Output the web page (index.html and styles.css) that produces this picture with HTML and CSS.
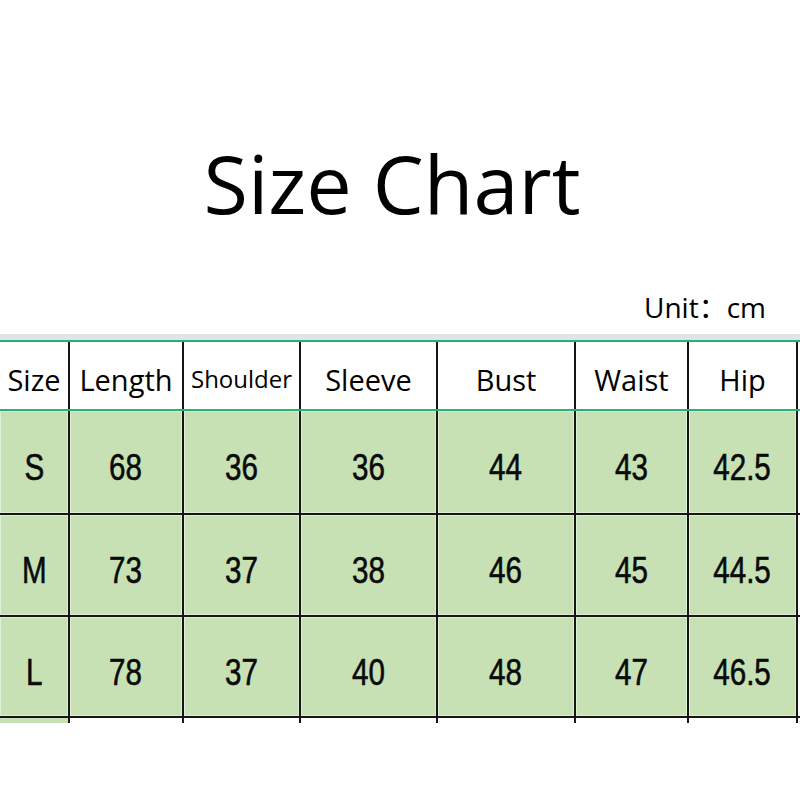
FILE: index.html
```html
<!DOCTYPE html>
<html>
<head>
<meta charset="utf-8">
<link rel="stylesheet" href="styles.css">
</head>
<body>
<div class="page">
  <h1 class="title">Size Chart</h1>
  <div class="unit">Unit：cm</div>
  <div class="strip"></div>
  <div class="table">
    <div class="row head">
      <div class="cell">Size</div>
      <div class="cell">Length</div>
      <div class="cell small">Shoulder</div>
      <div class="cell">Sleeve</div>
      <div class="cell">Bust</div>
      <div class="cell">Waist</div>
      <div class="cell">Hip</div>
    </div>
    <div class="row data">
      <div class="cell"><span class="num">S</span></div>
      <div class="cell"><span class="num">68</span></div>
      <div class="cell"><span class="num">36</span></div>
      <div class="cell"><span class="num">36</span></div>
      <div class="cell"><span class="num">44</span></div>
      <div class="cell"><span class="num">43</span></div>
      <div class="cell"><span class="num">42.5</span></div>
    </div>
    <div class="row data">
      <div class="cell"><span class="num">M</span></div>
      <div class="cell"><span class="num">73</span></div>
      <div class="cell"><span class="num">37</span></div>
      <div class="cell"><span class="num">38</span></div>
      <div class="cell"><span class="num">46</span></div>
      <div class="cell"><span class="num">45</span></div>
      <div class="cell"><span class="num">44.5</span></div>
    </div>
    <div class="row data">
      <div class="cell"><span class="num">L</span></div>
      <div class="cell"><span class="num">78</span></div>
      <div class="cell"><span class="num">37</span></div>
      <div class="cell"><span class="num">40</span></div>
      <div class="cell"><span class="num">48</span></div>
      <div class="cell"><span class="num">47</span></div>
      <div class="cell"><span class="num">46.5</span></div>
    </div>
    <div class="row tail">
      <div class="cell green"></div>
      <div class="cell"></div>
      <div class="cell"></div>
      <div class="cell"></div>
      <div class="cell"></div>
      <div class="cell"></div>
      <div class="cell"></div>
    </div>
  </div>
</div>
</body>
</html>
```
FILE: styles.css
```css
html, body {
  margin: 0;
  padding: 0;
  background: #ffffff;
}
.page {
  width: 800px;
  height: 800px;
  overflow: hidden;
  font-family: "Open Sans", "Noto Sans", "Noto Sans CJK SC", sans-serif;
  color: #000;
}
.title {
  margin: 0;
  padding-top: 128px;
  height: 120px;
  line-height: 110px;
  font-size: 81px;
  font-weight: 400;
  text-align: center;
  padding-right: 16px;
}
.unit {
  margin-top: 42px;
  height: 44px;
  line-height: 34px;
  font-size: 28px;
  text-align: right;
  padding-right: 34px;
}
.strip {
  height: 6px;
  background: #e2e3e8;
}
.table {
  width: 800px;
}
.row {
  display: grid;
  grid-template-columns: 70px 114px 117px 137px 138px 113px 109px 2px;
}
.cell {
  box-sizing: border-box;
  border-right: 2px solid #161616;
  display: flex;
  align-items: center;
  justify-content: center;
}
.head {
  border-top: 2px solid #1fb574;
  border-bottom: 2px solid #1fb574;
  height: 71px;
  box-sizing: border-box;
}
.head .cell {
  font-size: 29px;
  padding-top: 8px;
  background: #fff;
}
.head .cell.small {
  font-size: 24px;
  padding-top: 6px;
}
.data {
  height: 104px;
  box-sizing: border-box;
  border-bottom: 2px solid #161616;
}
.data:nth-child(3) {
  height: 102px;
}
.data:nth-child(4) {
  height: 101px;
}
.data .cell {
  background: #c7e1b5;
  box-shadow: inset 0 0 0 1px #e0efd4;
  font-family: "Liberation Sans", "Arial", sans-serif;
  font-size: 37px;
  color: #0a0a0a;
  padding-top: 12px;
}
.num {
  display: inline-block;
  transform: scaleX(0.8);
  -webkit-text-stroke: 0.6px #0a0a0a;
}
.tail {
  height: 5px;
}
.tail .cell.green {
  background: #c7e1b5;
}
```
